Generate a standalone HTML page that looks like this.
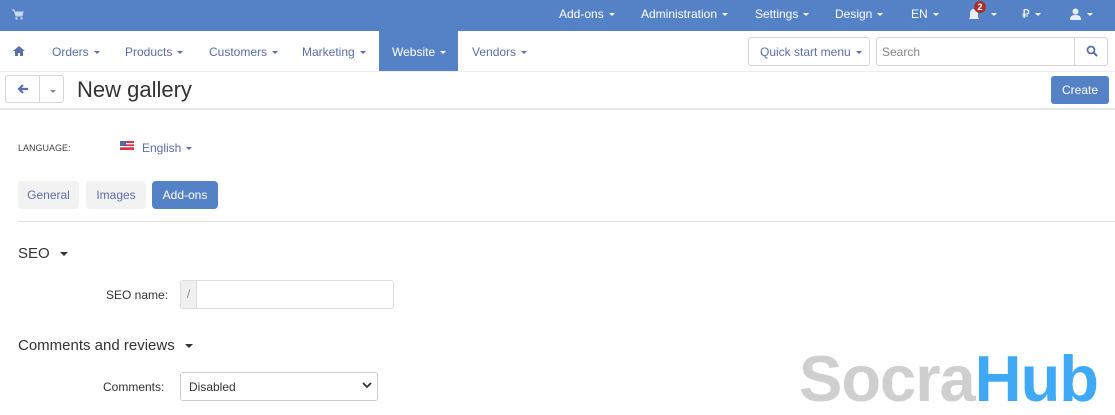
<!DOCTYPE html>
<html><head><style>
*{box-sizing:border-box;margin:0;padding:0}
body{width:1115px;height:411px;overflow:hidden;background:#fff;font-family:"Liberation Sans",sans-serif;font-size:12px;color:#333;position:relative}
.a{position:absolute;white-space:nowrap}
.top{position:absolute;left:0;top:0;width:1115px;height:31px;background:#5582c7}
.top .a{color:#fff;top:7px;font-size:12px}
.car{display:inline-block;width:0;height:0;border-left:3px solid transparent;border-right:3px solid transparent;border-top:3px solid currentColor;vertical-align:middle;margin-left:5px}
.nav .a{top:45px;color:#5a6fa8;font-size:12px}
.btn{position:absolute;border:1px solid #d5d5d5;border-radius:3px;background:#fff}
</style></head><body>
<div class="top">
<svg class="a" style="left:12px;top:9px" width="12" height="11" viewBox="0 0 12 11"><path d="M0 1h2l2 6h6l1-4H3" fill="#c8d6ee" stroke="#c8d6ee"/><circle cx="4.5" cy="9.5" r="1.2" fill="#c8d6ee"/><circle cx="9.5" cy="9.5" r="1.2" fill="#c8d6ee"/></svg>
<span class="a" style="left:559px">Add-ons<span class="car"></span></span>
<span class="a" style="left:641px">Administration<span class="car"></span></span>
<span class="a" style="left:755px">Settings<span class="car"></span></span>
<span class="a" style="left:835px">Design<span class="car"></span></span>
<span class="a" style="left:911px">EN<span class="car"></span></span>
<svg class="a" style="left:968px;top:8px" width="12" height="13" viewBox="0 0 12 13"><path d="M6 1c-3 0-4 2-4 5v3l-1 2h10l-1-2V6c0-3-1-5-4-5zM5 12h2" fill="#e8eef8"/></svg>
<span class="a" style="left:974px;top:1px;width:12px;height:12px;border-radius:6px;background:#a8312e;font-size:9px;font-weight:bold;text-align:center;line-height:12px">2</span>
<span class="a" style="left:986px;top:7px"><span class="car"></span></span>
<span class="a" style="left:1022px">₽<span class="car"></span></span>
<svg class="a" style="left:1070px;top:8px" width="11" height="12" viewBox="0 0 11 12"><circle cx="5.5" cy="3.5" r="3" fill="#e8eef8"/><path d="M0 12c0-4 2-5 5.5-5S11 8 11 12z" fill="#e8eef8"/></svg>
<span class="a" style="left:1082px;top:7px"><span class="car"></span></span>
</div>
<div class="nav">
<svg class="a" style="left:13px;top:46px" width="12" height="10" viewBox="0 0 12 10"><path d="M6 0L0 5h2v5h3V7h2v3h3V5h2z" fill="#5a6fa8"/></svg>
<span class="a" style="left:52px">Orders<span class="car"></span></span>
<span class="a" style="left:125px">Products<span class="car"></span></span>
<span class="a" style="left:209px">Customers<span class="car"></span></span>
<span class="a" style="left:302px">Marketing<span class="car"></span></span>
<div class="a" style="left:379px;top:31px;width:79px;height:40px;background:#5582c7"></div>
<span class="a" style="left:392px;color:#fff">Website<span class="car"></span></span>
<span class="a" style="left:472px">Vendors<span class="car"></span></span>
</div>
<div class="btn" style="left:748px;top:37px;width:122px;height:29px"></div>
<span class="a" style="left:760px;top:45px;color:#5a6fa8">Quick start menu<span class="car"></span></span>
<div class="btn" style="left:876px;top:37px;width:232px;height:29px;border-radius:3px"></div>
<div class="a" style="left:1074px;top:37px;width:1px;height:29px;background:#d5d5d5"></div>
<span class="a" style="left:882px;top:45px;color:#888">Search</span>
<svg class="a" style="left:1086px;top:45px" width="12" height="12" viewBox="0 0 12 12"><circle cx="5" cy="5" r="3.5" fill="none" stroke="#5a6fa8" stroke-width="1.8"/><path d="M7.5 7.5L11 11" stroke="#5a6fa8" stroke-width="2"/></svg>
<div class="a" style="left:0;top:71px;width:1115px;height:1px;background:#eee"></div>
<div class="btn" style="left:5px;top:75px;width:59px;height:28px"></div>
<div class="a" style="left:39px;top:75px;width:1px;height:28px;background:#d5d5d5"></div>
<svg class="a" style="left:17px;top:84px" width="12" height="10" viewBox="0 0 12 10"><path d="M11 5H2M6 1L2 5l4 4" fill="none" stroke="#5a6fa8" stroke-width="2.2"/></svg>
<span class="a" style="left:45px;top:84px;color:#888"><span class="car"></span></span>
<span class="a" style="left:77px;top:77px;font-size:22px;color:#333">New gallery</span>
<div class="a" style="left:1051px;top:76px;width:58px;height:28px;background:#5582c7;border-radius:3px;color:#fff;text-align:center;line-height:28px;font-size:12px">Create</div>
<div class="a" style="left:0;top:108px;width:1115px;height:2px;background:#e6e6e6"></div>
<span class="a" style="left:18px;top:143px;font-size:9px;color:#444">LANGUAGE:</span>
<svg class="a" style="left:120px;top:141px" width="14" height="9" viewBox="0 0 14 9"><rect width="14" height="9" fill="#d34"/><rect y="2" width="14" height="1.3" fill="#fff"/><rect y="5" width="14" height="1.3" fill="#fff"/><rect width="6" height="5" fill="#56a"/></svg>
<span class="a" style="left:142px;top:141px;color:#5a6fa8">English<span class="car"></span></span>
<div class="a" style="left:18px;top:181px;width:61px;height:28px;background:#f2f2f2;border-radius:4px;color:#5a6fa8;text-align:center;line-height:28px">General</div>
<div class="a" style="left:86px;top:181px;width:60px;height:28px;background:#f2f2f2;border-radius:4px;color:#5a6fa8;text-align:center;line-height:28px">Images</div>
<div class="a" style="left:152px;top:181px;width:66px;height:28px;background:#5582c7;border-radius:4px;color:#fff;text-align:center;line-height:28px">Add-ons</div>
<div class="a" style="left:18px;top:221px;width:1097px;height:1px;background:#e3e3e3"></div>
<span class="a" style="left:18px;top:245px;font-size:15px;color:#333">SEO<span class="car" style="margin-left:10px;border-width:4px 4px 0"></span></span>
<span class="a" style="left:106px;top:288px;color:#333">SEO name:</span>
<div class="btn" style="left:180px;top:280px;width:214px;height:29px;border-color:#ddd"></div>
<div class="a" style="left:181px;top:281px;width:16px;height:27px;background:#f0f0f0;border-right:1px solid #ddd;color:#888;text-align:center;line-height:27px">/</div>
<span class="a" style="left:18px;top:337px;font-size:15px;color:#333">Comments and reviews<span class="car" style="margin-left:10px;border-width:4px 4px 0"></span></span>
<span class="a" style="left:103px;top:380px;color:#333">Comments:</span>
<div class="btn" style="left:180px;top:372px;width:198px;height:29px;border-color:#ccc"></div>
<span class="a" style="left:189px;top:380px;color:#333">Disabled</span>
<svg class="a" style="left:362px;top:381px" width="10" height="8" viewBox="0 0 10 8"><path d="M1 2l4 4 4-4" fill="none" stroke="#333" stroke-width="1.8"/></svg>
<span class="a" style="left:799px;top:346px;font-size:65px;font-weight:bold;letter-spacing:-1px;color:#cfcfcf;line-height:1">Socra<span style="color:#3fa9f5">Hub</span></span>
</body></html>
